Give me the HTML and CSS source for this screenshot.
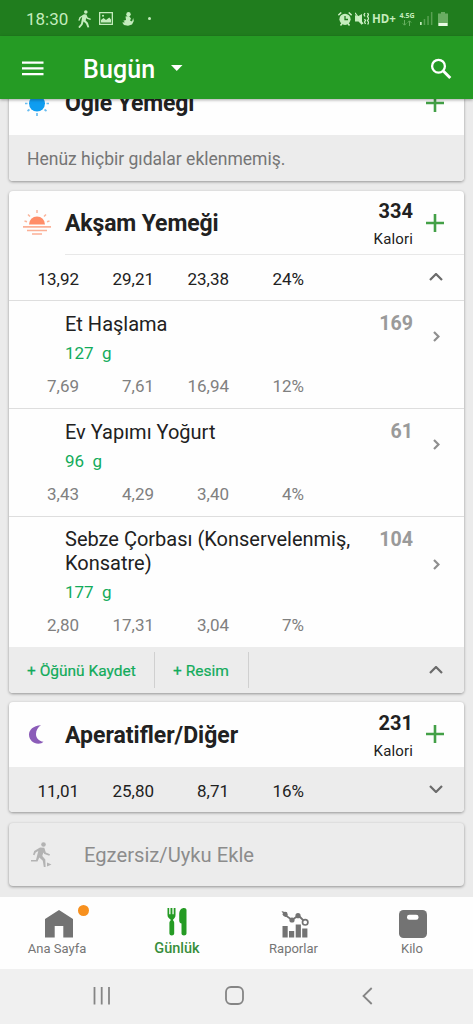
FILE: index.html
```
<!DOCTYPE html>
<html lang="tr">
<head>
<meta charset="utf-8">
<title>Bugün</title>
<link rel="stylesheet" href="styles.css">
</head>
<body>
<div class="screen">
  <div class="status">
    <span class="clock">18:30</span>
    <svg class="st-walk" width="14" height="18" viewBox="0 0 14 18"><circle cx="7.8" cy="2" r="1.8"/><path d="M6 4.2l2.4.2 1.3 3 3.2 1.3-.5 1.3-3.7-1.3-.5-1-.5 2.7 2.2 2.3 1.4 4.5-1.8.3-1.5-3.8-2.4-2.2-1 3.2-3 3.5-1.3-1.1 2.7-3.4L4.200 6.800 2.600 8.200 1.600 10.800.3 10.400 1.400 7.200z"/></svg>
    <svg class="st-pic" width="14" height="13" viewBox="0 0 14 13"><path fill-rule="evenodd" d="M0 0h14v13H0zM1.300 1.300v10.400h11.400V1.300z"/><path d="M2 10.500V8l2.500-2 2.500 2L10.300 5.500 12 7.500v3z"/><circle cx="4" cy="3.800" r="1"/></svg>
    <svg class="st-run" width="12" height="14" viewBox="0 0 12 14"><circle cx="6.500" cy="2.300" r="2.200"/><path d="M3.500 4.500L7 4l2 2.500-1 2 2 1L11.200 6l.6 3-1.800 3.500-4 1.200-4-.7L.2 10.500 3 10.300 1.300 8.800 4 8z"/></svg>
    <span class="st-dot"></span>
    <span class="spacer"></span>
    <svg class="st-alarm" width="14" height="14" viewBox="0 0 14 14"><path d="M.3 3.200L3.300.5M13.700 3.200L10.700.5M2.500 13.500l1.500-2M11.500 13.500l-1.500-2" fill="none" stroke="#d0f0c8" stroke-width="1.500"/><circle cx="7" cy="7.300" r="5.600"/><path d="M7 4v3.500h3" fill="none" stroke="#207d1e" stroke-width="1.300"/></svg>
    <svg class="st-mute" width="14" height="14" viewBox="0 0 14 14"><path d="M0 3l2.500 1.500L7 2v11L3.500 9.500H0z"/><path d="M0 .8l8 11" stroke="#d0f0c8" stroke-width="1.200" fill="none"/><path d="M10 1l-1 1.800 1 1.700M9.500 7l1 1.500-1 1.500 1 2M12.500 1l1 1.500-1 2 1.200 2-1.200 2 1.200 2-1 2" fill="none" stroke="#d0f0c8" stroke-width="1.300"/></svg>
    <span class="hd">HD+</span>
    <span class="net"><span>4.5G</span><svg width="10" height="6" viewBox="0 0 10 6"><path d="M2.500 0v5M.8 3.400l1.700 1.800 1.700-1.800M7.500 6V1M5.800 2.600L7.500.8l1.700 1.800" fill="none" stroke="#68b061" stroke-width="1"/></svg></span>
    <svg class="st-signal" width="13" height="13" viewBox="0 0 13 13"><path d="M0 10h1.700v3H0z"/><path fill="#58a052" d="M3.700 7h1.500v6H3.700zM7.300 4h1.500v9H7.300zM10.900 0h1.500v13h-1.500z"/></svg>
    <svg class="st-bat" width="10" height="14" viewBox="0 0 10 14"><path fill="#69ad62" d="M3 0h4v1.500h3V14H0V1.500h3z"/><path d="M.5 11h9v3H.5z" fill="#e8fbe4"/></svg>
  </div>
  <div class="appbar">
    <svg class="menu" width="22" height="16" viewBox="0 0 22 16"><path d="M0 .5h21.500v2.200H0zM0 6.300h21.500v2.200H0zM0 12.100h21.500v2.200H0z"/></svg>
    <span class="day">Bugün</span>
    <svg class="caret" width="12" height="7" viewBox="0 0 12 7"><path d="M0 0h11.500L5.750 6z"/></svg>
    <span class="spacer"></span>
    <svg class="search" width="22" height="22" viewBox="0 0 22 22"><circle cx="8.500" cy="8.200" r="6.400" fill="none" stroke="#fff" stroke-width="2.300"/><path d="M13 12.700l7.300 7.300" stroke="#fff" stroke-width="2.900" fill="none"/></svg>
  </div>

  <div class="main">
    <section class="card lunch">
      <div class="head">
        <span class="ic"><svg width="28" height="28" viewBox="0 0 28 28"><circle cx="14" cy="14.500" r="8" fill="#0f9df0"/><path d="M14 2v2.500M14 24v3M2 14.500h2.500M23.500 14.500H26M4.500 22l2-1.500M23.500 22l-2-1.500M5 7l2 1.500M23 7l-2 1.500" stroke="#69bdf0" stroke-width="1.700"/></svg></span>
        <h2 class="tight">Öğle Yemeği</h2>
        <svg class="plus" width="18" height="18" viewBox="0 0 18 18"><path d="M9 0v18M0 9h18" stroke="#43a047" stroke-width="2.600"/></svg>
      </div>
      <div class="empty"><span>Henüz hiçbir gıdalar eklenmemiş.</span></div>
    </section>

    <section class="card dinner">
      <div class="head">
        <span class="ic"><svg width="28" height="28" viewBox="0 0 28 28"><path d="M6 15.500a8 8 0 0 1 16 0z" fill="#ff8d68"/><path d="M14 1v3M5 5.500l2 2M23 5.500l-2 2M1.500 12l2.500.8M26.500 12l-2.500.8" stroke="#fab59b" stroke-width="1.500"/><path d="M0 17.800h28M4 21.500h20M9 25h10" stroke="#fbb096" stroke-width="1.700"/></svg></span>
        <h2 class="tight">Akşam Yemeği</h2>
        <div class="kcal"><b>334</b><span>Kalori</span></div>
        <svg class="plus" width="18" height="18" viewBox="0 0 18 18"><path d="M9 0v18M0 9h18" stroke="#43a047" stroke-width="2.600"/></svg>
      </div>
      <div class="rule"></div>
      <div class="nums totals"><span>13,92</span><span>29,21</span><span>23,38</span><span>24%</span><svg class="chev" width="14" height="8" viewBox="0 0 14 8"><path d="M1 7l6-6 6 6"/></svg></div>
      <article class="food">
        <div class="row"><div class="info"><h3>Et Haşlama</h3><p>127&nbsp; g</p></div><b>169</b></div>
        <svg class="next" width="7" height="11" viewBox="0 0 7 11"><path d="M1 1l4.500 4.500L1 10"/></svg>
        <div class="nums"><span>7,69</span><span>7,61</span><span>16,94</span><span>12%</span></div>
      </article>
      <article class="food">
        <div class="row"><div class="info"><h3>Ev Yapımı Yoğurt</h3><p>96&nbsp; g</p></div><b>61</b></div>
        <svg class="next" width="7" height="11" viewBox="0 0 7 11"><path d="M1 1l4.500 4.500L1 10"/></svg>
        <div class="nums"><span>3,43</span><span>4,29</span><span>3,40</span><span>4%</span></div>
      </article>
      <article class="food tall">
        <div class="row"><div class="info"><h3>Sebze Çorbası (Konservelenmiş,<br>Konsatre)</h3><p>177&nbsp; g</p></div><b>104</b></div>
        <svg class="next" width="7" height="11" viewBox="0 0 7 11"><path d="M1 1l4.500 4.500L1 10"/></svg>
        <div class="nums"><span>2,80</span><span>17,31</span><span>3,04</span><span>7%</span></div>
      </article>
      <div class="actions"><span class="save">+ Öğünü Kaydet</span><span class="pic">+ Resim</span><svg class="chev" width="14" height="8" viewBox="0 0 14 8"><path d="M1 7l6-6 6 6"/></svg></div>
    </section>

    <section class="card snacks">
      <div class="head">
        <span class="ic"><svg width="28" height="28" viewBox="0 0 28 28"><path d="M18 4.200C10 4.500 6 9 6 13.500c0 5.500 4.500 9.300 9.300 9.300 2.200 0 4.200-.8 5.200-2C15.500 20 13 17 13 13 13 9.300 15 6 18 4.200z" fill="#8b5cb8"/></svg></span>
        <h2>Aperatifler/Diğer</h2>
        <div class="kcal"><b>231</b><span>Kalori</span></div>
        <svg class="plus" width="18" height="18" viewBox="0 0 18 18"><path d="M9 0v18M0 9h18" stroke="#43a047" stroke-width="2.600"/></svg>
      </div>
      <div class="nums totals grey"><span>11,01</span><span>25,80</span><span>8,71</span><span>16%</span><svg class="chev" width="14" height="8" viewBox="0 0 14 8"><path d="M1 1l6 6 6-6"/></svg></div>
    </section>

    <section class="card exercise">
      <svg width="22" height="26" viewBox="0 0 22 26"><circle cx="12.500" cy="2.500" r="2.300"/><path d="M9 5.500l4.300.3 1.500 4.700 4.200 1.800-.7 1.500-5-1.800-1-1.500-1 3.500 3 3.500.3 7.500h-1.800l-1-6.300-3.500-3.200L6.500 19.500H0V18h5L7.300 9 4.700 10.500 3.500 13.200 2 12.700 3.200 9z"/><path d="M16 20.500l4.500 2-4.500 2z"/></svg>
      <span>Egzersiz/Uyku Ekle</span>
    </section>
  </div>

  <nav class="tabs">
    <a class="tab home"><svg width="28" height="28" viewBox="0 0 28 28"><path d="M14 0l14 9v18.500H18.300V16H9.700v11.500H0V9z"/></svg><span>Ana Sayfa</span><i class="badge"></i></a>
    <a class="tab diary"><svg width="28" height="28" viewBox="0 0 28 28"><path d="M4.500 0h1.700v6.300h1.300V0h1.900v6.300h1.300V0h1.800v7c0 2.500-1.300 3.600-2.300 4.200v1.600c1 .7 1 1.600 1 3v9.700c0 2.600-4.800 2.600-4.800 0v-9.700c0-1.400.1-2.300 1.100-3v-1.600C6.300 10.600 4.500 9.500 4.500 7zM23.500 2v23.500c0 2.600-5 2.600-5 0V15.500c-1-.3-2.300-1-2.300-3V6.500C16.200 2 18.500 0 21 0c1.500 0 2.500.7 2.500 2z"/></svg><span>Günlük</span></a>
    <a class="tab reports"><svg width="28" height="28" viewBox="0 0 28 28"><path d="M1.500 16h5.200v11.500H1.500zM8 21h5.200v6.500H8zM14.700 14.500h5.200v13h-5.200zM21.200 18.500h5.200v9h-5.200z"/><path d="M2 3.500l9 6.500 6.500-4.500 6.500 6.500" fill="none" stroke="#737373" stroke-width="1.800"/><path d="M.5 1l5 1.500 1 3.500-2.500 1z"/><circle cx="4.200" cy="4.200" r="2.400"/><circle cx="11" cy="10" r="2.600"/><circle cx="17" cy="5.700" r="2.600"/><circle cx="24.200" cy="12.300" r="2.700" fill="#fff" stroke="#737373" stroke-width="1.700"/></svg><span>Raporlar</span></a>
    <a class="tab weight"><svg width="28" height="28" viewBox="0 0 28 28"><rect width="28" height="28" rx="4.500"/><rect x="8" y="4.800" width="11.500" height="5" rx="2.300" fill="#fff"/></svg><span>Kilo</span></a>
  </nav>
  <div class="sysnav">
    <svg width="18" height="18" viewBox="0 0 18 18"><path d="M1.500 0v17.500M8.700 0v17.500M16 0v17.500"/></svg>
    <svg class="round" width="19" height="19" viewBox="0 0 19 19"><rect x="1" y="1" width="17" height="17" rx="5"/></svg>
    <svg class="back" width="11" height="18" viewBox="0 0 11 18"><path d="M9.700 1L1.500 9l8.200 8"/></svg>
  </div>
</div>
</body>
</html>
```
FILE: styles.css
```
* { box-sizing: border-box; margin: 0; padding: 0; }
body { font-family: Roboto, "Noto Sans", sans-serif; color: #212121; background: #ebebeb; }
svg { display: block; flex: none; }
.screen { width: 473px; height: 1024px; display: flex; flex-direction: column; overflow: hidden; }
.spacer { flex: 1; }

.status { height: 36px; flex: none; display: flex; align-items: center; padding: 1px 25px 0 26px; background: #207d1e; color: #c4ecbd; }
.status svg { fill: #c4ecbd; }
.clock { font-size: 17px; width: 52px; line-height: 20px; padding-top: 1px; }
.st-pic { margin-left: 7px; }
.st-run { margin-left: 9px; }
.st-dot { width: 3px; height: 3px; border-radius: 50%; background: #c4ecbd; margin-left: 14px; }
.st-mute { margin-left: 3px; }
.hd { font: bold 11.5px "Open Sans", sans-serif; margin-left: 3px; width: 27px; white-space: nowrap; }
.net { display: flex; flex-direction: column; align-items: center; width: 16px; font: bold 7px "Open Sans", sans-serif; line-height: 8px; }
.st-signal { margin-left: 5px; }
.st-bat { margin-left: 5px; }

.appbar { height: 63px; flex: none; display: flex; align-items: center; padding: 2px 21px 0 22px; background: #259b24; color: #fff; box-shadow: 0 1px 3px rgba(0,0,0,.35); z-index: 1; }
.appbar svg { fill: #fff; }
.day { font-size: 25px; font-weight: 500; line-height: 30px; margin-left: 39px; width: 88px; padding-top: 2px; letter-spacing: .1px; }

.main { flex: 1; min-height: 0; overflow: hidden; padding: 0 9px; }
.card { background: #fefefe; border-radius: 4px; box-shadow: 0 1px 3px rgba(0,0,0,.38); overflow: hidden; margin-bottom: 10px; }
.lunch { margin-top: -28px; }
.dinner { margin-bottom: 9px; }
.head { height: 64px; display: flex; align-items: center; padding-right: 20px; }
.ic { width: 56px; padding-left: 14px; flex: none; }
.head h2 { flex: 1; font-size: 23px; font-weight: 700; line-height: 28px; white-space: nowrap; padding-top: 2px; }
.head h2.tight { letter-spacing: -.13px; }
.plus { margin-top: -1px; }
.kcal { display: flex; flex-direction: column; align-items: flex-end; margin-right: 13px; padding-top: 4px; }
.kcal b { font-size: 20px; line-height: 28px; }
.kcal span { font-size: 15px; line-height: 28px; letter-spacing: .15px; }
.dinner .head { height: 63px; padding-top: 1px; }
.snacks .head { height: 65px; }
.empty { height: 46px; display: flex; align-items: center; padding: 2px 0 0 18px; background: #ececec; color: #757575; font-size: 17.500px; }
.rule { height: 1px; margin-left: 56px; background: #e8e8e8; }
.nums { display: grid; grid-template-columns: 70px 75px 75px 75px 1fr; align-items: center; text-align: right; font-size: 17px; }
.totals { height: 45px; padding-top: 2px; }
.totals .chev { justify-self: end; margin: -3px 21px 0 0; }
.grey { background: #ececec; }
.chev, .next { fill: none; stroke: #6b6b6b; stroke-width: 2.2; }
.food { height: 108px; border-top: 1px solid #dedede; display: grid; grid-template-columns: 404px 1fr; grid-template-rows: 73px 1fr; }
.food.tall { height: 131px; grid-template-rows: 96px 1fr; }
.row { display: flex; justify-content: space-between; padding: 11px 0 0 56px; }
.food h3 { font-size: 20px; font-weight: 400; line-height: 24px; white-space: nowrap; }
.food.tall h3 { line-height: 23.5px; }
.food p { font-size: 17px; line-height: 24px; padding-top: 5px; color: #12ab5b; }
.row b { font-size: 19.6px; line-height: 24px; color: #9a9a9a; font-weight: 700; }
.next { stroke: #8f8f8f; align-self: center; margin: -2px 0 0 19.5px; stroke-width: 2.2; }
.food .nums { grid-column: 1 / -1; color: #808080; align-items: start; line-height: 24px; }
.actions { height: 46px; background: #ececec; display: flex; align-items: center; color: #12ab5b; font-size: 15.500px; font-weight: 400; -webkit-text-stroke: .2px #12ab5b; padding-right: 21px; }
.actions span { height: 36px; line-height: 38px; border-right: 1px solid #d0d0d0; white-space: nowrap; }
.save { width: 146px; padding-left: 18px; }
.pic { width: 94px; padding-left: 18px; }
.actions .chev { margin-left: auto; }
.snacks { margin-bottom: 11px; }
.exercise { height: 63px; display: flex; align-items: center; background: #ececec; padding-left: 22px; color: #8c8c8c; font-size: 20.200px; }
.exercise svg { fill: #b3b3b3; }
.exercise span { margin-left: 31px; }

.tabs { height: 72px; flex: none; background: #fefefe; display: grid; grid-template-columns: 118px 118px 115px 1fr; z-index: 1; }
.tab { position: relative; display: flex; flex-direction: column; align-items: center; padding-top: 13px; color: #757575; fill: #737373; font-size: 13px; }
.tab span { line-height: 18px; margin-top: 2px; white-space: nowrap; }
.home span { margin-right: 4px; }
.reports svg { margin-left: 3px; }
.weight svg { margin-left: 2px; }
.diary { color: #388e3c; fill: #259b24; font-weight: 500; font-size: 14.500px; padding-top: 11px; }
.diary span { margin-top: 4px; }
.badge { position: absolute; left: 78px; top: 8px; width: 11px; height: 11px; border-radius: 50%; background: #f7901e; }
.sysnav { height: 55px; flex: none; background: #f0f0f0; display: flex; align-items: center; padding: 0 0 2px 93px; fill: none; stroke: #858585; stroke-width: 1.8; }
.round { margin-left: 114px; }
.back { margin-left: 118px; }
```
